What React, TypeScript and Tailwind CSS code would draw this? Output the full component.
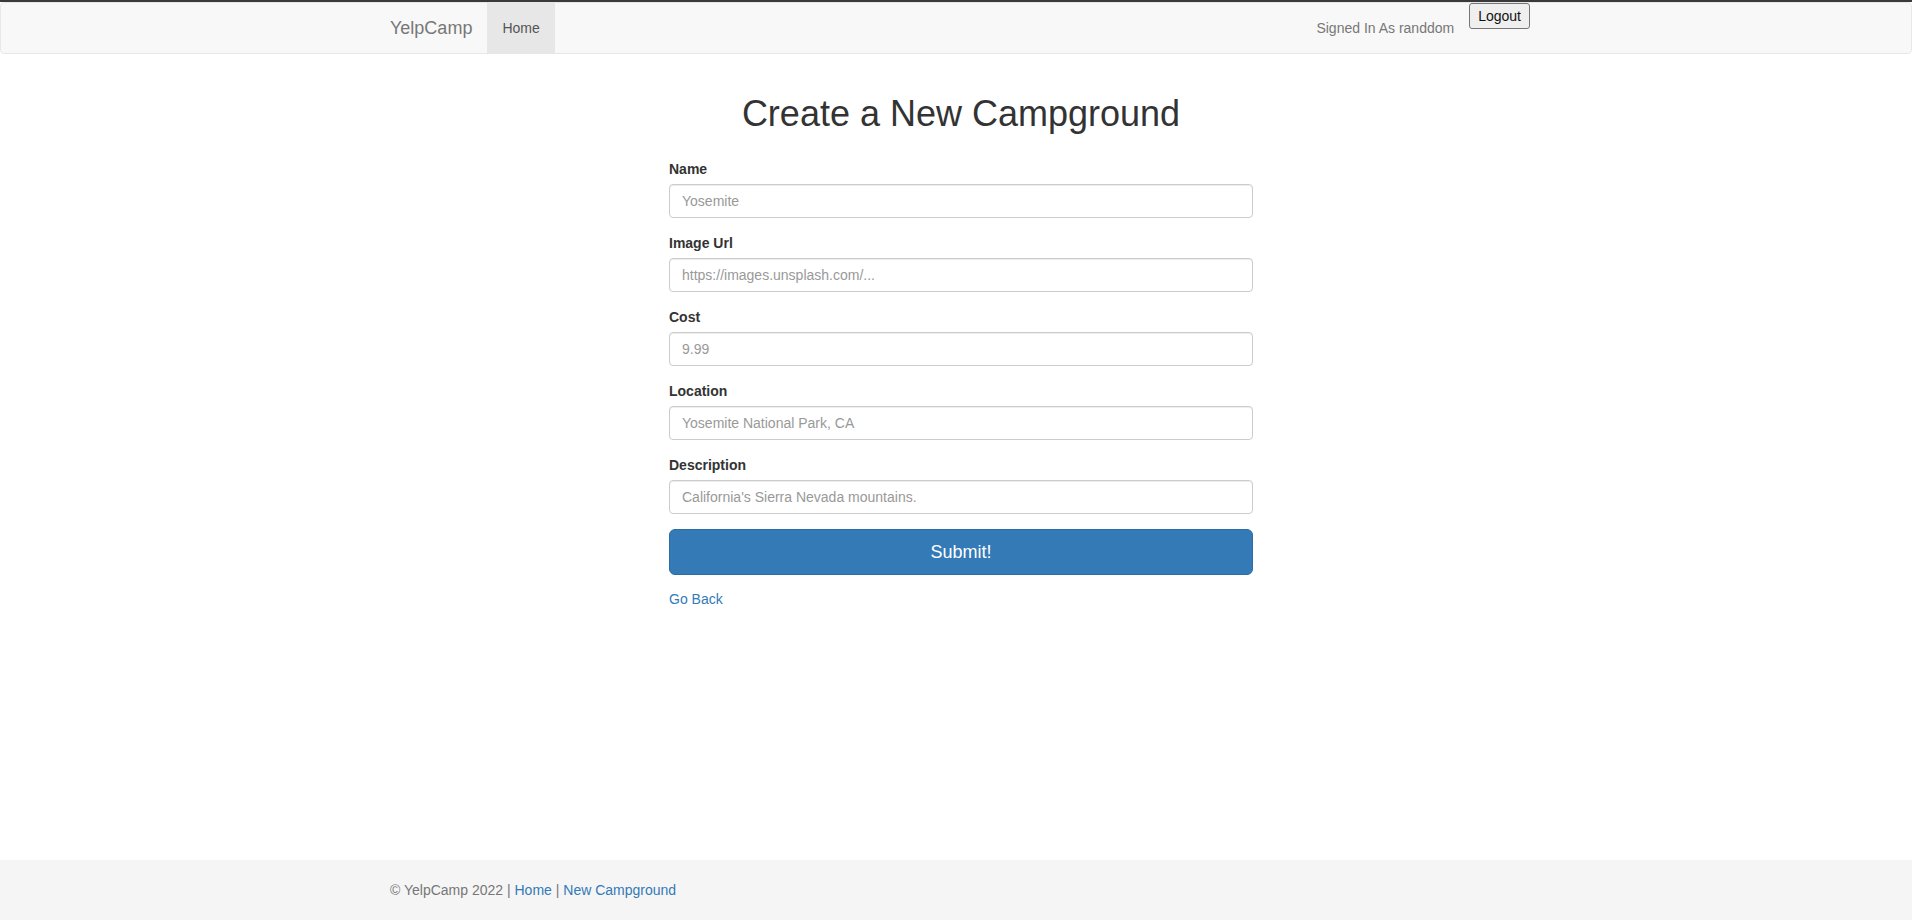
import React from "react";

const font = { fontFamily: '"Liberation Sans", Arial, Helvetica, sans-serif' };

function Field({ label, placeholder }: { label: string; placeholder: string }) {
  return (
    <div className="mb-[15px]">
      <label className="block mb-[5px] text-[14px] leading-[20px] font-bold text-[#333]">{label}</label>
      <input
        type="text"
        placeholder={placeholder}
        className="block w-full h-[34px] px-[12px] py-[6px] text-[14px] leading-[20px] text-[#555] bg-white border border-[#ccc] rounded-[4px] shadow-[inset_0_1px_1px_rgba(0,0,0,0.075)] placeholder:text-[#999] outline-none"
      />
    </div>
  );
}

export default function App() {
  return (
    <div className="h-screen flex flex-col bg-white text-[14px] leading-[20px] text-[#333]" style={font}>
      <div className="h-[2px] bg-[#3a3a3a]" />
      <nav className="h-[52px] bg-[#f8f8f8] border border-[#e7e7e7] rounded-[4px]">
        <div className="w-[1170px] ml-[374px] flex items-start h-[50px]">
          <a className="block px-[15px] py-[15px] text-[18px] leading-[20px] text-[#777] h-[50px]">YelpCamp</a>
          <a className="block px-[15px] py-[15px] text-[14px] leading-[20px] text-[#555] bg-[#e7e7e7] h-[50px]">Home</a>
          <div className="flex-1" />
          <span className="block px-[15px] py-[15px] text-[#777] leading-[20px]">Signed In As randdom</span>
          <button className="mt-[0px] mr-[15px] h-[26px] px-[8px] text-[14px] leading-[20px] text-[#111] bg-[#efefef] border border-[#767676] rounded-[3px]">
            Logout
          </button>
        </div>
      </nav>
      <main className="flex-1">
        <div className="w-[1170px] ml-[376px]">
          <h1 className="mt-[40px] mb-[25px] text-center text-[36px] leading-[39.6px] font-normal text-[#333]">
            Create a New Campground
          </h1>
          <div className="w-[584px] mx-auto">
            <Field label="Name" placeholder="Yosemite" />
            <Field label="Image Url" placeholder="https://images.unsplash.com/..." />
            <Field label="Cost" placeholder="9.99" />
            <Field label="Location" placeholder="Yosemite National Park, CA" />
            <Field label="Description" placeholder="California's Sierra Nevada mountains." />
            <button className="block w-full h-[46px] px-[16px] py-[10px] text-[18px] leading-[24px] text-white bg-[#337ab7] border border-[#2e6da4] rounded-[6px]">
              Submit!
            </button>
            <a className="block mt-[14px] text-[#337ab7] leading-[20px]">Go Back</a>
          </div>
        </div>
      </main>
      <footer className="h-[60px] bg-[#f5f5f5] py-[20px]">
        <div className="w-[1170px] ml-[375px] px-[15px] text-[#777] leading-[20px]">
          © YelpCamp 2022 | <a className="text-[#337ab7]">Home</a> | <a className="text-[#337ab7]">New Campground</a>
        </div>
      </footer>
    </div>
  );
}
